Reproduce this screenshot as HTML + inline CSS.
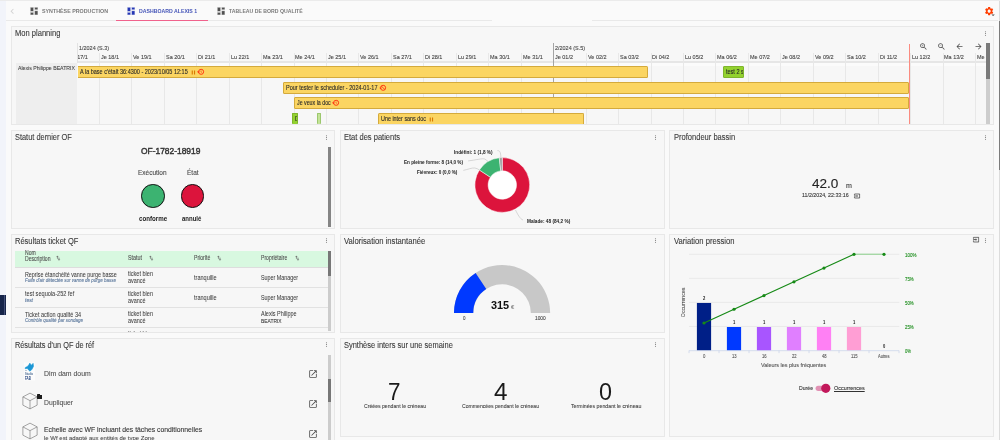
<!DOCTYPE html>
<html lang="fr"><head><meta charset="utf-8"><title>Dashboard Alexis 1</title>
<style>

html,body{margin:0;padding:0;}
body{width:1000px;height:440px;overflow:hidden;background:#fafafa;font-family:"Liberation Sans",sans-serif;}
#root{will-change:transform;position:relative;width:1000px;height:440px;overflow:hidden;background:#fafafa;}
.t{position:absolute;white-space:nowrap;line-height:1;transform-origin:0 50%;display:block;}
.a{position:absolute;}
.card{position:absolute;box-sizing:border-box;background:#f7f7f7;border:1px solid #e8e8e8;}
svg{position:absolute;overflow:visible;}
.bar{position:absolute;box-sizing:border-box;background:#fbd562;border:1px solid #d4aa3c;border-radius:1px;}
.vl{position:absolute;width:1px;background:#e6e6e6;}
</style></head><body>
<div id="root">
<div class="a" style="left:0.00px;top:0.00px;width:5.50px;height:440.00px;background:#f2f4fa;"></div>
<div class="a" style="left:0.00px;top:0.00px;width:1000.00px;height:1.00px;background:#ebebeb;"></div>
<div class="a" style="left:0.00px;top:294.80px;width:5.70px;height:20.40px;background:#17254a;"></div>
<div class="a" style="left:3.50px;top:294.80px;width:0.70px;height:20.40px;background:#46527a;"></div>
<div class="a" style="left:6.00px;top:20.30px;width:486.00px;height:1.00px;background:#e9e9e9;"></div>
<div class="a" style="left:592.40px;top:20.30px;width:405.60px;height:1.00px;background:#e9e9e9;"></div>
<div class="a" style="left:116.00px;top:19.60px;width:92.00px;height:1.30px;background:#f0628c;"></div>
<div class="a" style="left:998.50px;top:1.00px;width:1.50px;height:439.00px;background:#dcdcdc;"></div>
<div class="a" style="left:998.50px;top:21.00px;width:1.50px;height:149.00px;background:#7c7c7c;"></div>
<svg style="left:7.30px;top:5.60px" width="10.5" height="10.5" viewBox="0 0 24 24" ><path fill="#d2d2d2" d="M15.41 7.41L14 6l-6 6 6 6 1.41-1.41L10.83 12z"/></svg>
<svg style="left:28.85px;top:5.95px" width="10.2" height="10.2" viewBox="0 0 24 24"><path fill="#505050" stroke="#fafafa" stroke-width="1.1" d="M3 13h8V3H3v10zm0 8h8v-6H3v6zm10 0h8V11h-8v10zm0-18v6h8V3h-8z"/></svg>
<span class="t" id="t0" style="left:41.90px;top:9.175px;font-size:5.7px;color:#7a7a7a;font-weight:700;transform:scaleX(0.9364);">SYNTHÈSE PRODUCTION</span>
<svg style="left:125.85px;top:5.95px" width="10.2" height="10.2" viewBox="0 0 24 24"><path fill="#2436b4" stroke="#fafafa" stroke-width="1.1" d="M3 13h8V3H3v10zm0 8h8v-6H3v6zm10 0h8V11h-8v10zm0-18v6h8V3h-8z"/></svg>
<span class="t" id="t1" style="left:139.00px;top:9.175px;font-size:5.7px;color:#4555b8;font-weight:700;transform:scaleX(0.9132);">DASHBOARD ALEXIS 1</span>
<svg style="left:216.15px;top:5.95px" width="10.2" height="10.2" viewBox="0 0 24 24"><path fill="#505050" stroke="#fafafa" stroke-width="1.1" d="M3 13h8V3H3v10zm0 8h8v-6H3v6zm10 0h8V11h-8v10zm0-18v6h8V3h-8z"/></svg>
<span class="t" id="t2" style="left:229.40px;top:9.175px;font-size:5.7px;color:#7a7a7a;font-weight:700;transform:scaleX(0.9086);">TABLEAU DE BORD QUALITÉ</span>
<svg style="left:984.00px;top:5.90px" width="10.3" height="10.3" viewBox="0 0 24 24" ><path fill="#ff3d00" d="M19.14,12.94c0.04-0.3,0.06-0.61,0.06-0.94c0-0.32-0.02-0.64-0.07-0.94l2.03-1.58c0.18-0.14,0.23-0.41,0.12-0.61 l-1.92-3.32c-0.12-0.22-0.37-0.29-0.59-0.22l-2.39,0.96c-0.5-0.38-1.03-0.7-1.62-0.94L14.4,2.81c-0.04-0.24-0.24-0.41-0.48-0.41 h-3.84c-0.24,0-0.43,0.17-0.47,0.41L9.25,5.35C8.66,5.59,8.12,5.92,7.63,6.29L5.24,5.33c-0.22-0.08-0.47,0-0.59,0.22L2.74,8.87 C2.62,9.08,2.66,9.34,2.86,9.48l2.03,1.58C4.84,11.36,4.8,11.69,4.8,12s0.02,0.64,0.07,0.94l-2.03,1.58 c-0.18,0.14-0.23,0.41-0.12,0.61l1.92,3.32c0.12,0.22,0.37,0.29,0.59,0.22l2.39-0.96c0.5,0.38,1.03,0.7,1.62,0.94l0.36,2.54 c0.05,0.24,0.24,0.41,0.48,0.41h3.84c0.24,0,0.44-0.17,0.47-0.41l0.36-2.54c0.59-0.24,1.13-0.56,1.62-0.94l2.39,0.96 c0.22,0.08,0.47,0,0.59-0.22l1.92-3.32c0.12-0.22,0.07-0.47-0.12-0.61L19.14,12.94z M12,15.6c-1.98,0-3.6-1.62-3.6-3.6 s1.62-3.6,3.6-3.6s3.6,1.62,3.6,3.6S13.98,15.6,12,15.6z"/></svg>
<svg style="left:989.30px;top:10.90px" width="8.2" height="8.2" viewBox="0 0 24 24" ><path fill="#4a4a4a" d="M7 10l5 5 5-5z"/></svg>
<div class="card" style="left:10.80px;top:26.00px;width:983.30px;height:99.00px;"></div>
<div class="card" style="left:10.80px;top:130.00px;width:324.20px;height:99.00px;"></div>
<div class="card" style="left:340.00px;top:130.00px;width:324.90px;height:99.00px;"></div>
<div class="card" style="left:668.90px;top:130.00px;width:325.20px;height:99.00px;"></div>
<div class="card" style="left:10.80px;top:234.00px;width:324.20px;height:99.00px;"></div>
<div class="card" style="left:340.00px;top:234.00px;width:324.90px;height:99.00px;"></div>
<div class="card" style="left:668.90px;top:234.00px;width:325.20px;height:203.00px;"></div>
<div class="card" style="left:10.80px;top:338.00px;width:324.20px;height:122.00px;"></div>
<div class="card" style="left:340.00px;top:338.00px;width:324.90px;height:99.00px;"></div>
<span class="t" id="t3" style="left:14.80px;top:29.189px;font-size:8.4px;color:#3a3a3a;-webkit-text-stroke:0.1px #3a3a3a;transform:scaleX(0.9026);">Mon planning</span>
<span class="t" id="t4" style="left:14.60px;top:133.189px;font-size:8.4px;color:#3a3a3a;-webkit-text-stroke:0.1px #3a3a3a;transform:scaleX(0.8840);">Statut dernier OF</span>
<span class="t" id="t5" style="left:344.30px;top:133.189px;font-size:8.4px;color:#3a3a3a;-webkit-text-stroke:0.1px #3a3a3a;transform:scaleX(0.8992);">Etat des patients</span>
<span class="t" id="t6" style="left:673.60px;top:133.189px;font-size:8.4px;color:#3a3a3a;-webkit-text-stroke:0.1px #3a3a3a;transform:scaleX(0.9002);">Profondeur bassin</span>
<span class="t" id="t7" style="left:14.60px;top:236.989px;font-size:8.4px;color:#3a3a3a;-webkit-text-stroke:0.1px #3a3a3a;transform:scaleX(0.8961);">Résultats ticket QF</span>
<span class="t" id="t8" style="left:344.30px;top:236.989px;font-size:8.4px;color:#3a3a3a;-webkit-text-stroke:0.1px #3a3a3a;transform:scaleX(0.9157);">Valorisation instantanée</span>
<span class="t" id="t9" style="left:673.50px;top:236.989px;font-size:8.4px;color:#3a3a3a;-webkit-text-stroke:0.1px #3a3a3a;transform:scaleX(0.9108);">Variation pression</span>
<span class="t" id="t10" style="left:14.80px;top:340.989px;font-size:8.4px;color:#3a3a3a;-webkit-text-stroke:0.1px #3a3a3a;transform:scaleX(0.8739);">Résultats d'un QF de réf</span>
<span class="t" id="t11" style="left:344.30px;top:340.989px;font-size:8.4px;color:#3a3a3a;-webkit-text-stroke:0.1px #3a3a3a;transform:scaleX(0.8919);">Synthèse inters sur une semaine</span>
<svg style="left:981.50px;top:30.00px" width="7" height="7" viewBox="0 0 24 24" ><path fill="#787878" d="M12 8c1.1 0 2-.9 2-2s-.9-2-2-2-2 .9-2 2 .9 2 2 2zm0 2c-1.1 0-2 .9-2 2s.9 2 2 2 2-.9 2-2-.9-2-2-2zm0 6c-1.1 0-2 .9-2 2s.9 2 2 2 2-.9 2-2-.9-2-2-2z"/></svg>
<svg style="left:322.80px;top:133.50px" width="7" height="7" viewBox="0 0 24 24" ><path fill="#787878" d="M12 8c1.1 0 2-.9 2-2s-.9-2-2-2-2 .9-2 2 .9 2 2 2zm0 2c-1.1 0-2 .9-2 2s.9 2 2 2 2-.9 2-2-.9-2-2-2zm0 6c-1.1 0-2 .9-2 2s.9 2 2 2 2-.9 2-2-.9-2-2-2z"/></svg>
<svg style="left:652.10px;top:133.50px" width="7" height="7" viewBox="0 0 24 24" ><path fill="#787878" d="M12 8c1.1 0 2-.9 2-2s-.9-2-2-2-2 .9-2 2 .9 2 2 2zm0 2c-1.1 0-2 .9-2 2s.9 2 2 2 2-.9 2-2-.9-2-2-2zm0 6c-1.1 0-2 .9-2 2s.9 2 2 2 2-.9 2-2-.9-2-2-2z"/></svg>
<svg style="left:981.50px;top:133.50px" width="7" height="7" viewBox="0 0 24 24" ><path fill="#787878" d="M12 8c1.1 0 2-.9 2-2s-.9-2-2-2-2 .9-2 2 .9 2 2 2zm0 2c-1.1 0-2 .9-2 2s.9 2 2 2 2-.9 2-2-.9-2-2-2zm0 6c-1.1 0-2 .9-2 2s.9 2 2 2 2-.9 2-2-.9-2-2-2z"/></svg>
<svg style="left:322.80px;top:237.10px" width="7" height="7" viewBox="0 0 24 24" ><path fill="#787878" d="M12 8c1.1 0 2-.9 2-2s-.9-2-2-2-2 .9-2 2 .9 2 2 2zm0 2c-1.1 0-2 .9-2 2s.9 2 2 2 2-.9 2-2-.9-2-2-2zm0 6c-1.1 0-2 .9-2 2s.9 2 2 2 2-.9 2-2-.9-2-2-2z"/></svg>
<svg style="left:652.10px;top:237.10px" width="7" height="7" viewBox="0 0 24 24" ><path fill="#787878" d="M12 8c1.1 0 2-.9 2-2s-.9-2-2-2-2 .9-2 2 .9 2 2 2zm0 2c-1.1 0-2 .9-2 2s.9 2 2 2 2-.9 2-2-.9-2-2-2zm0 6c-1.1 0-2 .9-2 2s.9 2 2 2 2-.9 2-2-.9-2-2-2z"/></svg>
<svg style="left:981.50px;top:237.10px" width="7" height="7" viewBox="0 0 24 24" ><path fill="#787878" d="M12 8c1.1 0 2-.9 2-2s-.9-2-2-2-2 .9-2 2 .9 2 2 2zm0 2c-1.1 0-2 .9-2 2s.9 2 2 2 2-.9 2-2-.9-2-2-2zm0 6c-1.1 0-2 .9-2 2s.9 2 2 2 2-.9 2-2-.9-2-2-2z"/></svg>
<svg style="left:322.80px;top:341.00px" width="7" height="7" viewBox="0 0 24 24" ><path fill="#787878" d="M12 8c1.1 0 2-.9 2-2s-.9-2-2-2-2 .9-2 2 .9 2 2 2zm0 2c-1.1 0-2 .9-2 2s.9 2 2 2 2-.9 2-2-.9-2-2-2zm0 6c-1.1 0-2 .9-2 2s.9 2 2 2 2-.9 2-2-.9-2-2-2z"/></svg>
<svg style="left:652.10px;top:341.00px" width="7" height="7" viewBox="0 0 24 24" ><path fill="#787878" d="M12 8c1.1 0 2-.9 2-2s-.9-2-2-2-2 .9-2 2 .9 2 2 2zm0 2c-1.1 0-2 .9-2 2s.9 2 2 2 2-.9 2-2-.9-2-2-2zm0 6c-1.1 0-2 .9-2 2s.9 2 2 2 2-.9 2-2-.9-2-2-2z"/></svg>
<svg style="left:972.95px;top:236.4px" width="6.2" height="7.2" viewBox="0 0 24 24" preserveAspectRatio="none"><path fill="#444" stroke="#444" stroke-width="0.6" d="M21 3.01H3c-1.1 0-2 .9-2 2V9h2V4.99h18v14.03H3V15H1v4.01c0 1.1.9 1.98 2 1.98h18c1.1 0 2-.88 2-1.98v-14c0-1.11-.9-2-2-2zM11 16l4-4-4-4v3H1v2h10v3z"/></svg>
<div class="a" style="left:16.00px;top:62.60px;width:61.30px;height:61.40px;background:#eeeeee;"></div>
<div class="a" style="left:77.50px;top:61.00px;width:908.50px;height:2.00px;background:#e6e6e6;"></div>
<div class="a" style="left:77.50px;top:63.00px;width:908.50px;height:3.20px;background:#fbfbfb;"></div>
<div class="a" style="left:98.85px;top:52.50px;width:1.00px;height:71.50px;background:#e8e8e8;"></div>
<div class="a" style="left:131.30px;top:52.50px;width:1.00px;height:71.50px;background:#e8e8e8;"></div>
<div class="a" style="left:163.75px;top:52.50px;width:1.00px;height:71.50px;background:#e8e8e8;"></div>
<div class="a" style="left:196.20px;top:52.50px;width:1.00px;height:71.50px;background:#e8e8e8;"></div>
<div class="a" style="left:228.65px;top:52.50px;width:1.00px;height:71.50px;background:#e8e8e8;"></div>
<div class="a" style="left:261.10px;top:52.50px;width:1.00px;height:71.50px;background:#e8e8e8;"></div>
<div class="a" style="left:293.55px;top:52.50px;width:1.00px;height:71.50px;background:#e8e8e8;"></div>
<div class="a" style="left:326.00px;top:52.50px;width:1.00px;height:71.50px;background:#e8e8e8;"></div>
<div class="a" style="left:358.45px;top:52.50px;width:1.00px;height:71.50px;background:#e8e8e8;"></div>
<div class="a" style="left:390.90px;top:52.50px;width:1.00px;height:71.50px;background:#e8e8e8;"></div>
<div class="a" style="left:423.35px;top:52.50px;width:1.00px;height:71.50px;background:#e8e8e8;"></div>
<div class="a" style="left:455.80px;top:52.50px;width:1.00px;height:71.50px;background:#e8e8e8;"></div>
<div class="a" style="left:488.25px;top:52.50px;width:1.00px;height:71.50px;background:#e8e8e8;"></div>
<div class="a" style="left:520.70px;top:52.50px;width:1.00px;height:71.50px;background:#e8e8e8;"></div>
<div class="a" style="left:553.25px;top:43.40px;width:0.80px;height:80.60px;background:#a4a4a4;"></div>
<div class="a" style="left:585.60px;top:52.50px;width:1.00px;height:71.50px;background:#e8e8e8;"></div>
<div class="a" style="left:618.05px;top:52.50px;width:1.00px;height:71.50px;background:#e8e8e8;"></div>
<div class="a" style="left:650.50px;top:52.50px;width:1.00px;height:71.50px;background:#e8e8e8;"></div>
<div class="a" style="left:682.95px;top:52.50px;width:1.00px;height:71.50px;background:#e8e8e8;"></div>
<div class="a" style="left:715.40px;top:52.50px;width:1.00px;height:71.50px;background:#e8e8e8;"></div>
<div class="a" style="left:747.85px;top:52.50px;width:1.00px;height:71.50px;background:#e8e8e8;"></div>
<div class="a" style="left:780.30px;top:52.50px;width:1.00px;height:71.50px;background:#e8e8e8;"></div>
<div class="a" style="left:812.75px;top:52.50px;width:1.00px;height:71.50px;background:#e8e8e8;"></div>
<div class="a" style="left:845.20px;top:52.50px;width:1.00px;height:71.50px;background:#e8e8e8;"></div>
<div class="a" style="left:877.65px;top:52.50px;width:1.00px;height:71.50px;background:#e8e8e8;"></div>
<div class="a" style="left:910.10px;top:52.50px;width:1.00px;height:71.50px;background:#e8e8e8;"></div>
<div class="a" style="left:942.55px;top:52.50px;width:1.00px;height:71.50px;background:#e8e8e8;"></div>
<div class="a" style="left:975.00px;top:52.50px;width:1.00px;height:71.50px;background:#e8e8e8;"></div>
<div class="a" style="left:77.10px;top:43.40px;width:0.90px;height:19.20px;background:#e2e2e2;"></div>
<span class="t" id="t12" style="left:79.00px;top:45.706px;font-size:5.9px;color:#454545;-webkit-text-stroke:0.1px #454545;transform:scaleX(0.9253);">1/2024 (S.3)</span>
<span class="t" id="t13" style="left:555.00px;top:45.706px;font-size:5.9px;color:#454545;-webkit-text-stroke:0.1px #454545;transform:scaleX(0.9253);">2/2024 (S.5)</span>
<span class="t" id="t14" style="left:100.75px;top:55.006px;font-size:5.9px;color:#454545;-webkit-text-stroke:0.1px #454545;transform:scaleX(0.9300);">Je 18/1</span>
<span class="t" id="t15" style="left:133.20px;top:55.006px;font-size:5.9px;color:#454545;-webkit-text-stroke:0.1px #454545;transform:scaleX(0.9300);">Ve 19/1</span>
<span class="t" id="t16" style="left:165.65px;top:55.006px;font-size:5.9px;color:#454545;-webkit-text-stroke:0.1px #454545;transform:scaleX(0.9300);">Sa 20/1</span>
<span class="t" id="t17" style="left:198.10px;top:55.006px;font-size:5.9px;color:#454545;-webkit-text-stroke:0.1px #454545;transform:scaleX(0.9300);">Di 21/1</span>
<span class="t" id="t18" style="left:230.55px;top:55.006px;font-size:5.9px;color:#454545;-webkit-text-stroke:0.1px #454545;transform:scaleX(0.9300);">Lu 22/1</span>
<span class="t" id="t19" style="left:263.00px;top:55.006px;font-size:5.9px;color:#454545;-webkit-text-stroke:0.1px #454545;transform:scaleX(0.9300);">Ma 23/1</span>
<span class="t" id="t20" style="left:295.45px;top:55.006px;font-size:5.9px;color:#454545;-webkit-text-stroke:0.1px #454545;transform:scaleX(0.9300);">Me 24/1</span>
<span class="t" id="t21" style="left:327.90px;top:55.006px;font-size:5.9px;color:#454545;-webkit-text-stroke:0.1px #454545;transform:scaleX(0.9300);">Je 25/1</span>
<span class="t" id="t22" style="left:360.35px;top:55.006px;font-size:5.9px;color:#454545;-webkit-text-stroke:0.1px #454545;transform:scaleX(0.9300);">Ve 26/1</span>
<span class="t" id="t23" style="left:392.80px;top:55.006px;font-size:5.9px;color:#454545;-webkit-text-stroke:0.1px #454545;transform:scaleX(0.9300);">Sa 27/1</span>
<span class="t" id="t24" style="left:425.25px;top:55.006px;font-size:5.9px;color:#454545;-webkit-text-stroke:0.1px #454545;transform:scaleX(0.9300);">Di 28/1</span>
<span class="t" id="t25" style="left:457.70px;top:55.006px;font-size:5.9px;color:#454545;-webkit-text-stroke:0.1px #454545;transform:scaleX(0.9300);">Lu 29/1</span>
<span class="t" id="t26" style="left:490.15px;top:55.006px;font-size:5.9px;color:#454545;-webkit-text-stroke:0.1px #454545;transform:scaleX(0.9300);">Ma 30/1</span>
<span class="t" id="t27" style="left:522.60px;top:55.006px;font-size:5.9px;color:#454545;-webkit-text-stroke:0.1px #454545;transform:scaleX(0.9300);">Me 31/1</span>
<span class="t" id="t28" style="left:555.05px;top:55.006px;font-size:5.9px;color:#454545;-webkit-text-stroke:0.1px #454545;transform:scaleX(0.9300);">Je 01/2</span>
<span class="t" id="t29" style="left:587.50px;top:55.006px;font-size:5.9px;color:#454545;-webkit-text-stroke:0.1px #454545;transform:scaleX(0.9300);">Ve 02/2</span>
<span class="t" id="t30" style="left:619.95px;top:55.006px;font-size:5.9px;color:#454545;-webkit-text-stroke:0.1px #454545;transform:scaleX(0.9300);">Sa 03/2</span>
<span class="t" id="t31" style="left:652.40px;top:55.006px;font-size:5.9px;color:#454545;-webkit-text-stroke:0.1px #454545;transform:scaleX(0.9300);">Di 04/2</span>
<span class="t" id="t32" style="left:684.85px;top:55.006px;font-size:5.9px;color:#454545;-webkit-text-stroke:0.1px #454545;transform:scaleX(0.9300);">Lu 05/2</span>
<span class="t" id="t33" style="left:717.30px;top:55.006px;font-size:5.9px;color:#454545;-webkit-text-stroke:0.1px #454545;transform:scaleX(0.9300);">Ma 06/2</span>
<span class="t" id="t34" style="left:749.75px;top:55.006px;font-size:5.9px;color:#454545;-webkit-text-stroke:0.1px #454545;transform:scaleX(0.9300);">Me 07/2</span>
<span class="t" id="t35" style="left:782.20px;top:55.006px;font-size:5.9px;color:#454545;-webkit-text-stroke:0.1px #454545;transform:scaleX(0.9300);">Je 08/2</span>
<span class="t" id="t36" style="left:814.65px;top:55.006px;font-size:5.9px;color:#454545;-webkit-text-stroke:0.1px #454545;transform:scaleX(0.9300);">Ve 09/2</span>
<span class="t" id="t37" style="left:847.10px;top:55.006px;font-size:5.9px;color:#454545;-webkit-text-stroke:0.1px #454545;transform:scaleX(0.9300);">Sa 10/2</span>
<span class="t" id="t38" style="left:879.55px;top:55.006px;font-size:5.9px;color:#454545;-webkit-text-stroke:0.1px #454545;transform:scaleX(0.9300);">Di 11/2</span>
<span class="t" id="t39" style="left:912.00px;top:55.006px;font-size:5.9px;color:#454545;-webkit-text-stroke:0.1px #454545;transform:scaleX(0.9300);">Lu 12/2</span>
<span class="t" id="t40" style="left:944.45px;top:55.006px;font-size:5.9px;color:#454545;-webkit-text-stroke:0.1px #454545;transform:scaleX(0.9300);">Ma 13/2</span>
<div class="a" style="left:77.8px;top:52px;width:20px;height:9px;overflow:hidden">
<span class="t" id="t41" style="left:-9.90px;top:3.006px;font-size:5.9px;color:#454545;-webkit-text-stroke:0.1px #454545;transform:scaleX(0.9300);">Me 17/1</span>
</div>
<div class="a" style="left:970px;top:52px;width:15.5px;height:9px;overflow:hidden">
<span class="t" id="t42" style="left:6.70px;top:3.006px;font-size:5.9px;color:#454545;-webkit-text-stroke:0.1px #454545;transform:scaleX(0.9300);">Me 14/2</span>
</div>
<span class="t" id="t43" style="left:18.00px;top:64.836px;font-size:6.1px;color:#454545;-webkit-text-stroke:0.1px #454545;transform:scaleX(0.8513);">Alexis Philippe BEATRIX</span>
<div class="bar" style="left:77.60px;top:66.30px;width:570.20px;height:12.00px;background:#fbd562;border-color:#d4aa3c;border-left:none;border-radius:0 1.5px 1.5px 0;"></div>
<div class="bar" style="left:283.30px;top:82.00px;width:625.90px;height:11.80px;background:#fbd562;border-color:#d4aa3c;"></div>
<div class="bar" style="left:294.20px;top:97.20px;width:615.00px;height:11.60px;background:#fbd562;border-color:#d4aa3c;"></div>
<div class="bar" style="left:378.40px;top:112.60px;width:205.30px;height:11.40px;background:#fbd562;border-color:#d4aa3c;border-bottom:none;border-radius:1.5px 1.5px 0 0;"></div>
<div class="bar" style="left:722.80px;top:66.20px;width:20.90px;height:12.00px;background:#93d22f;border-color:#7fb52c;"></div>
<div class="bar" style="left:292.00px;top:112.60px;width:5.60px;height:11.40px;background:#93d22f;border-color:#7fb52c;border-bottom:none;"></div>
<div class="bar" style="left:317.20px;top:112.60px;width:3.40px;height:11.40px;background:#c4e498;border-color:#9cc76e;border-bottom:none;"></div>
<span class="t" id="t44" style="left:80.00px;top:68.982px;font-size:6.4px;color:#2a2a2a;-webkit-text-stroke:0.1px #2a2a2a;transform:scaleX(0.8625);">A la base c'était 36:4300 - 2023/10/05 12:15</span>
<span class="t" id="t45" style="left:286.00px;top:84.582px;font-size:6.4px;color:#2a2a2a;-webkit-text-stroke:0.1px #2a2a2a;transform:scaleX(0.8642);">Pour tester le scheduler - 2024-01-17</span>
<span class="t" id="t46" style="left:296.75px;top:99.682px;font-size:6.4px;color:#2a2a2a;-webkit-text-stroke:0.1px #2a2a2a;transform:scaleX(0.8260);">Je veux la doc</span>
<span class="t" id="t47" style="left:381.00px;top:116.182px;font-size:6.4px;color:#2a2a2a;-webkit-text-stroke:0.1px #2a2a2a;transform:scaleX(0.8443);">Une inter sans doc</span>
<div class="a" style="left:723.4px;top:67px;width:20px;height:10.5px;overflow:hidden">
<span class="t" id="t48" style="left:2.60px;top:1.982px;font-size:6.4px;color:#2a2a2a;-webkit-text-stroke:0.1px #2a2a2a;transform:scaleX(0.8600);">test 2 sem</span>
</div>
<div class="a" style="left:293px;top:113px;width:3.8px;height:11px;overflow:hidden">
<span class="t" id="t49" style="left:2.00px;top:3.182px;font-size:6.4px;color:#2a2a2a;-webkit-text-stroke:0.1px #2a2a2a;transform:scaleX(0.8600);">DI</span>
</div>
<svg style="left:189.50px;top:69.30px" width="6.8" height="6.8" viewBox="0 0 24 24" ><path fill="#d97a00" d="M6 19h4V5H6v14zm8-14v14h4V5h-4z"/></svg>
<svg style="left:196.50px;top:68.40px" width="7.6" height="7.6" viewBox="0 0 24 24"><circle cx="13" cy="12" r="8" fill="none" stroke="#ff2a0c" stroke-width="2.8"/><path fill="none" stroke="#ff2a0c" stroke-width="1.8" d="M12.6 7.6v4.8l3.4 2"/><path fill="#ff2a0c" d="M-0.5 11h9.5l-4.7 5z"/></svg>
<svg style="left:379.20px;top:84.20px" width="7.6" height="7.6" viewBox="0 0 24 24"><circle cx="13" cy="12" r="8" fill="none" stroke="#ff2a0c" stroke-width="2.8"/><line x1="7.4" y1="6.4" x2="18.6" y2="17.6" stroke="#ff2a0c" stroke-width="2.6"/><path fill="#ff2a0c" d="M0.5 11.5h8.5l-4.2 4.4z"/></svg>
<svg style="left:332.30px;top:99.20px" width="7.6" height="7.6" viewBox="0 0 24 24"><circle cx="13" cy="12" r="8" fill="none" stroke="#ff2a0c" stroke-width="2.8"/><path fill="none" stroke="#ff2a0c" stroke-width="1.8" d="M12.6 7.6v4.8l3.4 2"/><path fill="#ff2a0c" d="M-0.5 11h9.5l-4.7 5z"/></svg>
<svg style="left:427.60px;top:115.50px" width="6.8" height="6.8" viewBox="0 0 24 24" ><path fill="#d97a00" d="M6 19h4V5H6v14zm8-14v14h4V5h-4z"/></svg>
<div class="a" style="left:908.60px;top:43.60px;width:1.50px;height:80.90px;background:#fb8b80;"></div>
<div class="a" style="left:986.40px;top:43.20px;width:3.50px;height:80.80px;background:#cdcdcd;"></div>
<div class="a" style="left:986.40px;top:43.20px;width:3.50px;height:35.60px;background:#7a7a7a;"></div>
<svg style="left:918.60px;top:41.90px" width="9.0" height="9.0" viewBox="0 0 24 24" ><path fill="#505050" d="M15.5 14h-.79l-.28-.27C15.41 12.59 16 11.11 16 9.5 16 5.91 13.09 3 9.5 3S3 5.91 3 9.5 5.91 16 9.5 16c1.61 0 3.09-.59 4.23-1.57l.27.28v.79l5 4.99L20.49 19l-4.99-5zm-6 0C7.01 14 5 11.99 5 9.5S7.01 5 9.5 5 14 7.01 14 9.5 11.99 14 9.5 14z M12 10h-2v2H9v-2H7V9h2V7h1v2h2v1z"/></svg>
<svg style="left:936.60px;top:41.90px" width="9.0" height="9.0" viewBox="0 0 24 24" ><path fill="#505050" d="M15.5 14h-.79l-.28-.27C15.41 12.59 16 11.11 16 9.5 16 5.91 13.09 3 9.5 3S3 5.91 3 9.5 5.91 16 9.5 16c1.61 0 3.09-.59 4.23-1.57l.27.28v.79l5 4.99L20.49 19l-4.99-5zm-6 0C7.01 14 5 11.99 5 9.5S7.01 5 9.5 5 14 7.01 14 9.5 11.99 14 9.5 14z M7 9h5v1H7z"/></svg>
<svg style="left:955.20px;top:41.90px" width="9.0" height="9.0" viewBox="0 0 24 24" ><path fill="#505050" d="M20 11H7.83l5.59-5.59L12 4l-8 8 8 8 1.41-1.41L7.83 13H20v-2z"/></svg>
<svg style="left:973.60px;top:41.90px" width="9.0" height="9.0" viewBox="0 0 24 24" ><path fill="#505050" d="M12 4l-1.41 1.41L16.17 11H4v2h12.17l-5.58 5.59L12 20l8-8z"/></svg>
<span class="t" id="t50" style="left:141.00px;top:146.789px;font-size:8.4px;color:#333;-webkit-text-stroke:0.4px #333;transform:scaleX(1.0044);">OF-1782-18919</span>
<span class="t" id="t51" style="left:138.40px;top:170.213px;font-size:6.6px;color:#4a4a4a;-webkit-text-stroke:0.1px #4a4a4a;transform:scaleX(0.9873);">Exécution</span>
<span class="t" id="t52" style="left:186.50px;top:170.213px;font-size:6.6px;color:#4a4a4a;-webkit-text-stroke:0.1px #4a4a4a;transform:scaleX(0.9885);">État</span>
<div class="a" style="left:141px;top:184px;width:23.6px;height:23.6px;box-sizing:border-box;border-radius:50%;background:#3cb371;border:1.5px solid #111"></div>
<div class="a" style="left:180.7px;top:184px;width:23.6px;height:23.6px;box-sizing:border-box;border-radius:50%;background:#dc143c;border:1.5px solid #111"></div>
<span class="t" id="t53" style="left:138.80px;top:216.328px;font-size:6.7px;color:#222;font-weight:700;transform:scaleX(0.9251);">conforme</span>
<span class="t" id="t54" style="left:182.40px;top:216.328px;font-size:6.7px;color:#222;font-weight:700;transform:scaleX(0.8997);">annulé</span>
<div class="a" style="left:327.60px;top:147.20px;width:3.20px;height:79.60px;background:#858585;"></div>
<svg style="left:0;top:0" width="1000" height="440" viewBox="0 0 1000 440"><circle cx="502.3" cy="185.0" r="14.7" fill="#fff"/><path fill="#dc143c" stroke="#fff" stroke-width="0.5" d="M502.30 157.60A27.4 27.4 0 1 1 479.36 170.01L490.41 177.23A14.2 14.2 0 1 0 502.30 170.80Z"/><path fill="#3cb371" stroke="#fff" stroke-width="0.5" d="M479.36 170.01A27.4 27.4 0 0 1 499.29 157.77L500.74 170.89A14.2 14.2 0 0 0 490.41 177.23Z"/><path fill="#a0a0a0" stroke="#fff" stroke-width="0.5" d="M499.29 157.77A27.4 27.4 0 0 1 502.30 157.60L502.30 170.80A14.2 14.2 0 0 0 500.74 170.89Z"/><path fill="none" stroke="#b5b5b5" stroke-width="0.5" d="M497.4 150.6 C499.5 150.6 500.8 151.5 500.9 157.8"/><path fill="none" stroke="#b5b5b5" stroke-width="0.5" d="M468.2 160.9 C476 160 482 158.2 484.7 159 C486.2 159.5 487 160.4 488 161.6"/><path fill="none" stroke="#b5b5b5" stroke-width="0.5" d="M463.3 170.4 C468 169.4 472 167.6 474.8 168 C476.6 168.3 478 169 479.3 169.9"/><path fill="none" stroke="#b5b5b5" stroke-width="0.5" d="M515.5 210 C517.5 214 520 219 523 220"/></svg>
<span class="t" id="t55" style="left:454.00px;top:150.429px;font-size:5.4px;color:#1c1c1c;font-weight:700;transform:scaleX(0.8708);">Indéfini: 1 (1,8 %)</span>
<span class="t" id="t56" style="left:403.60px;top:160.029px;font-size:5.4px;color:#1c1c1c;font-weight:700;transform:scaleX(0.8599);">En pleine forme: 8 (14,0 %)</span>
<span class="t" id="t57" style="left:417.00px;top:170.029px;font-size:5.4px;color:#1c1c1c;font-weight:700;transform:scaleX(0.8533);">Fiévreux: 0 (0,0 %)</span>
<span class="t" id="t58" style="left:527.40px;top:219.029px;font-size:5.4px;color:#1c1c1c;font-weight:700;transform:scaleX(0.8738);">Malade: 48 (84,2 %)</span>
<span class="t" id="t59" style="left:811.80px;top:177.188px;font-size:13.6px;color:#222;-webkit-text-stroke:0.1px #222;transform:scaleX(0.9974);">42.0</span>
<span class="t" id="t60" style="left:845.90px;top:182.859px;font-size:6.9px;color:#333;-webkit-text-stroke:0.1px #333;transform:scaleX(1.0261);">m</span>
<span class="t" id="t61" style="left:802.30px;top:192.560px;font-size:5.6px;color:#333;-webkit-text-stroke:0.1px #333;transform:scaleX(0.9441);">11/2/2024, 22:33:16</span>
<svg style="left:854.25px;top:192.65px" width="6.2" height="6.0" viewBox="0 0 24 24" preserveAspectRatio="none"><path fill="#3a3a3a" stroke="#3a3a3a" stroke-width="0.6" d="M21 3.01H3c-1.1 0-2 .9-2 2V9h2V4.99h18v14.03H3V15H1v4.01c0 1.1.9 1.98 2 1.98h18c1.1 0 2-.88 2-1.98v-14c0-1.11-.9-2-2-2zM11 16l4-4-4-4v3H1v2h10v3z"/></svg>
<div class="a" style="left:14.50px;top:250.70px;width:313.10px;height:16.80px;background:#d8f8e0;"></div>
<span class="t" id="t62" style="left:24.50px;top:249.782px;font-size:6.4px;color:#505050;-webkit-text-stroke:0.1px #505050;transform:scaleX(0.7926);">Nom</span>
<span class="t" id="t63" style="left:24.50px;top:256.382px;font-size:6.4px;color:#505050;-webkit-text-stroke:0.1px #505050;transform:scaleX(0.7977);">Description</span>
<span class="t" id="t64" style="left:128.00px;top:254.882px;font-size:6.4px;color:#505050;-webkit-text-stroke:0.1px #505050;transform:scaleX(0.8382);">Statut</span>
<span class="t" id="t65" style="left:193.75px;top:254.882px;font-size:6.4px;color:#505050;-webkit-text-stroke:0.1px #505050;transform:scaleX(0.8025);">Priorité</span>
<span class="t" id="t66" style="left:261.25px;top:254.882px;font-size:6.4px;color:#505050;-webkit-text-stroke:0.1px #505050;transform:scaleX(0.7943);">Propriétaire</span>
<svg style="left:55.3px;top:254.8px" width="6.4" height="6.4" viewBox="0 0 24 24"><path fill="#666" stroke="#666" stroke-width="0.5" d="M16 17.01V10h-2v7.01h-3L15 21l4-3.99h-3zM9 3L5 6.99h3V14h2V6.99h3L9 3z"/></svg>
<svg style="left:148.1px;top:254.8px" width="6.4" height="6.4" viewBox="0 0 24 24"><path fill="#666" stroke="#666" stroke-width="0.5" d="M16 17.01V10h-2v7.01h-3L15 21l4-3.99h-3zM9 3L5 6.99h3V14h2V6.99h3L9 3z"/></svg>
<svg style="left:216.2px;top:254.8px" width="6.4" height="6.4" viewBox="0 0 24 24"><path fill="#666" stroke="#666" stroke-width="0.5" d="M16 17.01V10h-2v7.01h-3L15 21l4-3.99h-3zM9 3L5 6.99h3V14h2V6.99h3L9 3z"/></svg>
<svg style="left:293.9px;top:254.8px" width="6.4" height="6.4" viewBox="0 0 24 24"><path fill="#666" stroke="#666" stroke-width="0.5" d="M16 17.01V10h-2v7.01h-3L15 21l4-3.99h-3zM9 3L5 6.99h3V14h2V6.99h3L9 3z"/></svg>
<span class="t" id="t67" style="left:24.50px;top:272.098px;font-size:6.5px;color:#3c3c3c;-webkit-text-stroke:0.05px #3c3c3c;transform:scaleX(0.8244);">Reprise étanchéité vanne purge basse</span>
<span class="t" id="t68" style="left:24.50px;top:277.998px;font-size:5.2px;color:#58759a;font-style:italic;-webkit-text-stroke:0.1px #58759a;transform:scaleX(0.8635);">Fuite d'air détectée sur vanne de purge basse</span>
<span class="t" id="t69" style="left:24.50px;top:290.898px;font-size:6.5px;color:#3c3c3c;-webkit-text-stroke:0.05px #3c3c3c;transform:scaleX(0.8624);">test sequoia-252 fef</span>
<span class="t" id="t70" style="left:24.50px;top:297.798px;font-size:5.2px;color:#58759a;font-style:italic;-webkit-text-stroke:0.1px #58759a;transform:scaleX(0.9552);">test</span>
<span class="t" id="t71" style="left:24.50px;top:312.498px;font-size:6.5px;color:#3c3c3c;-webkit-text-stroke:0.05px #3c3c3c;transform:scaleX(0.8453);">Ticket action qualité 34</span>
<span class="t" id="t72" style="left:24.50px;top:317.898px;font-size:5.2px;color:#58759a;font-style:italic;-webkit-text-stroke:0.1px #58759a;transform:scaleX(0.8705);">Contrôle qualité par sondage</span>
<span class="t" id="t73" style="left:128.00px;top:271.348px;font-size:6.5px;color:#3c3c3c;-webkit-text-stroke:0.05px #3c3c3c;transform:scaleX(0.8538);">ticket bien</span>
<span class="t" id="t74" style="left:128.00px;top:278.448px;font-size:6.5px;color:#3c3c3c;-webkit-text-stroke:0.05px #3c3c3c;transform:scaleX(0.8393);">avancé</span>
<span class="t" id="t75" style="left:128.00px;top:291.348px;font-size:6.5px;color:#3c3c3c;-webkit-text-stroke:0.05px #3c3c3c;transform:scaleX(0.8538);">ticket bien</span>
<span class="t" id="t76" style="left:128.00px;top:298.448px;font-size:6.5px;color:#3c3c3c;-webkit-text-stroke:0.05px #3c3c3c;transform:scaleX(0.8393);">avancé</span>
<span class="t" id="t77" style="left:128.00px;top:311.498px;font-size:6.5px;color:#3c3c3c;-webkit-text-stroke:0.05px #3c3c3c;transform:scaleX(0.8538);">ticket bien</span>
<span class="t" id="t78" style="left:128.00px;top:317.598px;font-size:6.5px;color:#3c3c3c;-webkit-text-stroke:0.05px #3c3c3c;transform:scaleX(0.8393);">avancé</span>
<span class="t" id="t79" style="left:193.75px;top:275.098px;font-size:6.5px;color:#3c3c3c;-webkit-text-stroke:0.05px #3c3c3c;transform:scaleX(0.8526);">tranquille</span>
<span class="t" id="t80" style="left:193.75px;top:295.098px;font-size:6.5px;color:#3c3c3c;-webkit-text-stroke:0.05px #3c3c3c;transform:scaleX(0.8526);">tranquille</span>
<span class="t" id="t81" style="left:261.25px;top:275.098px;font-size:6.5px;color:#3c3c3c;-webkit-text-stroke:0.05px #3c3c3c;transform:scaleX(0.8257);">Super Manager</span>
<span class="t" id="t82" style="left:261.25px;top:295.098px;font-size:6.5px;color:#3c3c3c;-webkit-text-stroke:0.05px #3c3c3c;transform:scaleX(0.8257);">Super Manager</span>
<span class="t" id="t83" style="left:261.25px;top:311.498px;font-size:6.5px;color:#3c3c3c;-webkit-text-stroke:0.05px #3c3c3c;transform:scaleX(0.8396);">Alexis Philippe</span>
<span class="t" id="t84" style="left:261.25px;top:318.436px;font-size:6.1px;color:#3c3c3c;-webkit-text-stroke:0.1px #3c3c3c;transform:scaleX(0.8059);">BEATRIX</span>
<div class="a" style="left:14.5px;top:328px;width:313px;height:4.4px;overflow:hidden">
<span class="t" id="t85" style="left:113.50px;top:3.398px;font-size:6.5px;color:#3c3c3c;-webkit-text-stroke:0.05px #3c3c3c;transform:scaleX(0.8538);">ticket bien</span>
</div>
<div class="a" style="left:14.50px;top:287.10px;width:313.10px;height:0.80px;background:#e2e2e2;"></div>
<div class="a" style="left:14.50px;top:307.10px;width:313.10px;height:0.80px;background:#e2e2e2;"></div>
<div class="a" style="left:14.50px;top:327.10px;width:313.10px;height:0.80px;background:#e2e2e2;"></div>
<div class="a" style="left:14.50px;top:266.90px;width:313.10px;height:0.80px;background:#dddddd;"></div>
<div class="a" style="left:327.90px;top:250.70px;width:3.00px;height:80.60px;background:#cccccc;"></div>
<div class="a" style="left:327.90px;top:250.70px;width:3.00px;height:25.10px;background:#777777;"></div>
<svg style="left:0;top:0" width="1000" height="440" viewBox="0 0 1000 440"><path fill="#c8c8c8" d="M453.95 313.10A48.1 48.1 0 0 1 550.15 313.10L530.85 313.10A28.8 28.8 0 0 0 473.25 313.10Z"/><path fill="#0039ff" d="M453.95 313.10A48.1 48.1 0 0 1 475.64 272.90L486.24 289.03A28.8 28.8 0 0 0 473.25 313.10Z"/></svg>
<span class="t" id="t86" style="left:490.60px;top:299.912px;font-size:10.5px;color:#111;font-weight:700;transform:scaleX(1.0381);">315</span>
<span class="t" id="t87" style="left:510.80px;top:305.906px;font-size:4.6px;color:#8a8a8a;-webkit-text-stroke:0.1px #8a8a8a;transform:scaleX(1.2488);">€</span>
<span class="t" id="t88" style="left:463.20px;top:315.767px;font-size:5.0px;color:#444;-webkit-text-stroke:0.1px #444;transform:scaleX(0.8989);">0</span>
<span class="t" id="t89" style="left:534.70px;top:315.767px;font-size:5.0px;color:#444;-webkit-text-stroke:0.1px #444;transform:scaleX(0.9618);">1000</span>
<span class="t" id="t90" style="left:387.85px;top:381.231px;font-size:23.0px;color:#1a1a1a;transform:scaleX(0.9768);">7</span>
<span class="t" id="t91" style="left:493.90px;top:381.231px;font-size:23.0px;color:#1a1a1a;transform:scaleX(1.0549);">4</span>
<span class="t" id="t92" style="left:599.20px;top:381.231px;font-size:23.0px;color:#1a1a1a;transform:scaleX(1.0159);">0</span>
<span class="t" id="t93" style="left:364.00px;top:403.236px;font-size:6.1px;color:#444;-webkit-text-stroke:0.1px #444;transform:scaleX(0.8434);">Créées pendant le créneau</span>
<span class="t" id="t94" style="left:462.00px;top:403.236px;font-size:6.1px;color:#444;-webkit-text-stroke:0.1px #444;transform:scaleX(0.8418);">Commencées pendant le créneau</span>
<span class="t" id="t95" style="left:570.80px;top:403.236px;font-size:6.1px;color:#444;-webkit-text-stroke:0.1px #444;transform:scaleX(0.8587);">Terminées pendant le créneau</span>
<span class="t" id="t96" style="left:44.30px;top:371.159px;font-size:6.9px;color:#484848;-webkit-text-stroke:0.05px #484848;transform:scaleX(0.9996);">Dim dam doum</span>
<span class="t" id="t97" style="left:44.30px;top:400.159px;font-size:6.9px;color:#484848;-webkit-text-stroke:0.05px #484848;transform:scaleX(0.9864);">Dupliquer</span>
<span class="t" id="t98" style="left:44.30px;top:426.959px;font-size:6.9px;color:#333;-webkit-text-stroke:0.1px #333;transform:scaleX(0.9874);">Echelle avec WF incluant des tâches conditionnelles</span>
<span class="t" id="t99" style="left:44.30px;top:435.667px;font-size:5.0px;color:#444;-webkit-text-stroke:0.05px #444;transform:scaleX(1.1974);">le Wf est adapté aux entités de type Zone</span>
<svg style="left:307.50px;top:369.20px" width="10" height="10" viewBox="0 0 24 24" ><path fill="#505050" d="M19 19H5V5h7V3H5c-1.11 0-2 .9-2 2v14c0 1.1.89 2 2 2h14c1.1 0 2-.9 2-2v-7h-2v7zM14 3v2h3.59l-9.83 9.83 1.41 1.41L19 6.41V10h2V3h-7z"/></svg>
<svg style="left:307.50px;top:399.10px" width="10" height="10" viewBox="0 0 24 24" ><path fill="#505050" d="M19 19H5V5h7V3H5c-1.11 0-2 .9-2 2v14c0 1.1.89 2 2 2h14c1.1 0 2-.9 2-2v-7h-2v7zM14 3v2h3.59l-9.83 9.83 1.41 1.41L19 6.41V10h2V3h-7z"/></svg>
<svg style="left:307.50px;top:428.70px" width="10" height="10" viewBox="0 0 24 24" ><path fill="#505050" d="M19 19H5V5h7V3H5c-1.11 0-2 .9-2 2v14c0 1.1.89 2 2 2h14c1.1 0 2-.9 2-2v-7h-2v7zM14 3v2h3.59l-9.83 9.83 1.41 1.41L19 6.41V10h2V3h-7z"/></svg>
<div class="a" style="left:327.70px;top:354.50px;width:3.20px;height:85.50px;background:#cccccc;"></div>
<div class="a" style="left:327.70px;top:379.00px;width:3.20px;height:22.50px;background:#777777;"></div>
<svg style="left:20.50px;top:392.30px" width="18" height="18" viewBox="0 0 24 24"><path fill="none" stroke="#7a7a7a" stroke-width="0.9" stroke-linejoin="round" d="M12 1.5L21.5 6.5V17.5L12 22.5L2.5 17.5V6.5ZM2.5 6.5L12 11.5L21.5 6.5M12 11.5V22.5"/></svg>
<svg style="left:20.50px;top:422.30px" width="18" height="18" viewBox="0 0 24 24"><path fill="none" stroke="#7a7a7a" stroke-width="0.9" stroke-linejoin="round" d="M12 1.5L21.5 6.5V17.5L12 22.5L2.5 17.5V6.5ZM2.5 6.5L12 11.5L21.5 6.5M12 11.5V22.5"/></svg>
<div class="a" style="left:37.00px;top:394.20px;width:5.40px;height:4.40px;background:#1c1c1c;border-radius:0.6px;"></div>
<div class="a" style="left:40.00px;top:394.00px;width:2.50px;height:1.10px;background:#f7f7f7;"></div>
<svg style="left:0;top:0" width="1000" height="440" viewBox="0 0 1000 440"><rect x="24.1" y="362.5" width="10.8" height="18" fill="#fcfcfc"/><path fill="#1b97d5" stroke="#1b97d5" stroke-width="0.5" stroke-linejoin="round" d="M29.81 363.08L31.35 365.21L33.12 363.32L33.59 366.27L32.06 369.22L30.05 371.23L28.51 369.93L27.45 368.40L25.09 368.75L25.32 367.45L27.69 366.27L28.99 364.50Z"/></svg>
<span class="t" id="t100" style="left:25.30px;top:369.438px;font-size:2.2px;color:#4a6a92;font-weight:700;transform:scaleX(0.6634);">Le</span>
<span class="t" id="t101" style="left:25.10px;top:373.361px;font-size:3.0px;color:#4a6a92;font-weight:700;transform:scaleX(0.8562);">Studio</span>
<span class="t" id="t102" style="left:25.10px;top:376.298px;font-size:5.2px;color:#1f3f7a;font-weight:700;transform:scaleX(0.5590);">FAB</span>
<svg style="left:0;top:0" width="1000" height="440" viewBox="0 0 1000 440"><line x1="689.0" x2="899.3" y1="326.45" y2="326.45" stroke="#e6e6e6" stroke-width="0.8"/><line x1="689.0" x2="899.3" y1="302.40" y2="302.40" stroke="#e6e6e6" stroke-width="0.8"/><line x1="689.0" x2="899.3" y1="278.35" y2="278.35" stroke="#e6e6e6" stroke-width="0.8"/><line x1="689.0" x2="899.3" y1="254.30" y2="254.30" stroke="#e6e6e6" stroke-width="0.8"/><rect x="696.90" y="302.95" width="14.2" height="47.55" fill="#001f87"/><rect x="726.90" y="327.00" width="14.2" height="23.50" fill="#0039ff"/><rect x="756.90" y="327.00" width="14.2" height="23.50" fill="#a855ff"/><rect x="786.90" y="327.00" width="14.2" height="23.50" fill="#e07fff"/><rect x="816.90" y="327.00" width="14.2" height="23.50" fill="#ff80f4"/><rect x="846.90" y="327.00" width="14.2" height="23.50" fill="#ff9ed4"/><line x1="689.0" x2="899.0" y1="350.7" y2="350.7" stroke="#ccd6eb" stroke-width="0.8"/><line x1="689.0" x2="689.0" y1="350.5" y2="353.1" stroke="#ccd6eb" stroke-width="0.8"/><line x1="719.0" x2="719.0" y1="350.5" y2="353.1" stroke="#ccd6eb" stroke-width="0.8"/><line x1="749.0" x2="749.0" y1="350.5" y2="353.1" stroke="#ccd6eb" stroke-width="0.8"/><line x1="779.0" x2="779.0" y1="350.5" y2="353.1" stroke="#ccd6eb" stroke-width="0.8"/><line x1="809.0" x2="809.0" y1="350.5" y2="353.1" stroke="#ccd6eb" stroke-width="0.8"/><line x1="839.0" x2="839.0" y1="350.5" y2="353.1" stroke="#ccd6eb" stroke-width="0.8"/><line x1="869.0" x2="869.0" y1="350.5" y2="353.1" stroke="#ccd6eb" stroke-width="0.8"/><line x1="899.0" x2="899.0" y1="350.5" y2="353.1" stroke="#ccd6eb" stroke-width="0.8"/><polyline fill="none" stroke="#a6d8a6" stroke-width="1.4" points="854.00,254.30 884.00,254.30"/><polyline fill="none" stroke="#168a16" stroke-width="1.2" points="704.00,323.01 734.00,309.27 764.00,295.53 794.00,281.79 824.00,268.04 854.00,254.30"/><circle cx="704.00" cy="323.01" r="1.6" fill="#168a16"/><circle cx="734.00" cy="309.27" r="1.6" fill="#168a16"/><circle cx="764.00" cy="295.53" r="1.6" fill="#168a16"/><circle cx="794.00" cy="281.79" r="1.6" fill="#168a16"/><circle cx="824.00" cy="268.04" r="1.6" fill="#168a16"/><circle cx="854.00" cy="254.30" r="1.6" fill="#168a16"/><circle cx="884.00" cy="254.30" r="1.6" fill="#168a16"/><rect x="815.6" y="385.7" width="14" height="5.2" rx="2.6" fill="#e191b4"/><circle cx="825.8" cy="388.3" r="4.6" fill="#c2185b"/></svg>
<span class="t" id="t103" style="left:702.85px;top:297.306px;font-size:4.6px;color:#222;font-weight:700;transform:scaleX(0.8976);">2</span>
<span class="t" id="t104" style="left:702.80px;top:354.414px;font-size:5.3px;color:#555;-webkit-text-stroke:0.1px #555;transform:scaleX(0.8127);">0</span>
<span class="t" id="t105" style="left:732.85px;top:321.356px;font-size:4.6px;color:#222;font-weight:700;transform:scaleX(0.8976);">1</span>
<span class="t" id="t106" style="left:731.70px;top:354.414px;font-size:5.3px;color:#555;-webkit-text-stroke:0.1px #555;transform:scaleX(0.7788);">13</span>
<span class="t" id="t107" style="left:762.85px;top:321.356px;font-size:4.6px;color:#222;font-weight:700;transform:scaleX(0.8976);">1</span>
<span class="t" id="t108" style="left:761.70px;top:354.414px;font-size:5.3px;color:#555;-webkit-text-stroke:0.1px #555;transform:scaleX(0.7788);">16</span>
<span class="t" id="t109" style="left:792.85px;top:321.356px;font-size:4.6px;color:#222;font-weight:700;transform:scaleX(0.8976);">1</span>
<span class="t" id="t110" style="left:791.70px;top:354.414px;font-size:5.3px;color:#555;-webkit-text-stroke:0.1px #555;transform:scaleX(0.7788);">22</span>
<span class="t" id="t111" style="left:822.85px;top:321.356px;font-size:4.6px;color:#222;font-weight:700;transform:scaleX(0.8976);">1</span>
<span class="t" id="t112" style="left:821.70px;top:354.414px;font-size:5.3px;color:#555;-webkit-text-stroke:0.1px #555;transform:scaleX(0.7788);">48</span>
<span class="t" id="t113" style="left:852.85px;top:321.356px;font-size:4.6px;color:#222;font-weight:700;transform:scaleX(0.8976);">1</span>
<span class="t" id="t114" style="left:850.70px;top:354.414px;font-size:5.3px;color:#555;-webkit-text-stroke:0.1px #555;transform:scaleX(0.7808);">115</span>
<span class="t" id="t115" style="left:882.85px;top:345.406px;font-size:4.6px;color:#222;font-weight:700;transform:scaleX(0.8976);">0</span>
<span class="t" id="t116" style="left:878.20px;top:354.414px;font-size:5.3px;color:#555;-webkit-text-stroke:0.1px #555;transform:scaleX(0.7576);">Autres</span>
<span class="t" id="t117" style="left:905.40px;top:349.429px;font-size:5.4px;color:#168a16;-webkit-text-stroke:0.1px #168a16;transform:scaleX(0.7695);">0%</span>
<span class="t" id="t118" style="left:905.40px;top:325.379px;font-size:5.4px;color:#168a16;-webkit-text-stroke:0.1px #168a16;transform:scaleX(0.8058);">25%</span>
<span class="t" id="t119" style="left:905.40px;top:301.329px;font-size:5.4px;color:#168a16;-webkit-text-stroke:0.1px #168a16;transform:scaleX(0.8058);">50%</span>
<span class="t" id="t120" style="left:905.40px;top:277.279px;font-size:5.4px;color:#168a16;-webkit-text-stroke:0.1px #168a16;transform:scaleX(0.8058);">75%</span>
<span class="t" id="t121" style="left:905.40px;top:253.229px;font-size:5.4px;color:#168a16;-webkit-text-stroke:0.1px #168a16;transform:scaleX(0.8335);">100%</span>
<span class="t" id="t122" style="left:761.10px;top:362.890px;font-size:5.8px;color:#555;-webkit-text-stroke:0.1px #555;transform:scaleX(0.9396);">Valeurs les plus fréquentes</span>
<div class="a" style="left:677.4px;top:286px;width:16px;height:30px;">
<span class="t" id="t123" style="left:-6.80px;top:13.852px;font-size:4.9px;color:#555;-webkit-text-stroke:0.1px #555;transform:rotate(-90deg) scaleX(1.0601);transform-origin:50% 50%;">Occurrences</span>
</div>
<span class="t" id="t124" style="left:798.80px;top:386.490px;font-size:5.8px;color:#333;-webkit-text-stroke:0.1px #333;transform:scaleX(0.8863);">Durée</span>
<span class="t" id="t125" style="left:833.60px;top:386.490px;font-size:5.8px;color:#333;-webkit-text-stroke:0.1px #333;transform:scaleX(0.9343);text-decoration:underline;text-decoration-thickness:0.5px;text-underline-offset:0.6px;">Occurrences</span>
</div>
</body></html>
